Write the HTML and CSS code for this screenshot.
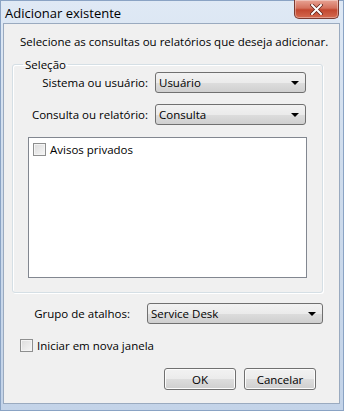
FILE: index.html
```html
<!DOCTYPE html>
<html lang="pt-BR">
<head>
  <meta charset="UTF-8">
  <title>Adicionar existente</title>
  <link rel="stylesheet" href="styles.css">
</head>
<body>
  <div class="window">
    <div class="titlebar">
      <span class="title">Adicionar existente</span>
      <button class="close" type="button">
        <svg width="13" height="11" viewBox="0 0 13 11">
          <path d="M2 1 L11 10 M11 1 L2 10" stroke="#5a1f16" stroke-width="3.4" stroke-linecap="square"/>
          <path d="M2 1 L11 10 M11 1 L2 10" stroke="#ffffff" stroke-width="2" stroke-linecap="square"/>
        </svg>
      </button>
    </div>

    <div class="client">
      <p class="intro">Selecione as consultas ou relatórios que deseja adicionar.</p>

      <!-- Grupo de seleção -->
      <fieldset class="group">
        <legend>Seleção</legend>
        <div class="row first">
          <label class="lbl">Sistema ou usuário:</label>
          <div class="combo">Usuário<span class="arrow"></span></div>
        </div>
        <div class="row">
          <label class="lbl">Consulta ou relatório:</label>
          <div class="combo">Consulta<span class="arrow"></span></div>
        </div>
        <div class="listbox">
          <div class="check"><span class="box"></span>Avisos privados</div>
        </div>
      </fieldset>

      <div class="row shortcut">
        <label class="lbl">Grupo de atalhos:</label>
        <div class="combo wide">Service Desk<span class="arrow"></span></div>
      </div>

      <div class="check newwin"><span class="box"></span>Iniciar em nova janela</div>

      <div class="actions">
        <button class="btn" type="button">OK</button>
        <button class="btn" type="button">Cancelar</button>
      </div>
    </div>
  </div>
</body>
</html>
```

FILE: styles.css
```css
/* Janela estilo Windows 7 */
body {
  margin: 0;
  padding: 0;
  font-family: "Open Sans", "Noto Sans", sans-serif;
  font-size: 11.5px;
  color: #000;
}

.window {
  width: 344px;
  height: 411px;
  box-sizing: border-box;
  background: linear-gradient(#dfe9f5, #cfdcec 40%, #c3d3e8);
  border: 1px solid #8aa3c4;
  padding: 0 3px 6px 2px;
  display: flex;
  flex-direction: column;
}

.titlebar {
  height: 22px;
  display: flex;
  align-items: flex-start;
  justify-content: space-between;
}

.title {
  font-size: 13px;
  line-height: 22px;
  padding-left: 2px;
  margin-top: 1px;
}

.close {
  width: 45px;
  height: 19px;
  margin-top: -1px;
  margin-right: 1px;
  border: 1px solid #7a3a30;
  border-top: none;
  border-radius: 0 0 5px 5px;
  background: linear-gradient(#e8a394, #d4715d 45%, #c2472f 55%, #d46a4f);
  box-shadow: inset 0 0 0 1px rgba(255, 255, 255, 0.35);
  display: flex;
  align-items: center;
  justify-content: center;
  padding: 0;
}

.client {
  flex: 1;
  background: #f0f0f0;
  border: 1px solid #9aaabf;
  padding: 0 16px 0 8px;
}

.intro {
  margin: 10px 0 0 8px;
  white-space: nowrap;
}

.group {
  margin: 8px 0 0 0;
  padding: 0 15px 14px 15px;
  min-inline-size: 0;
  border: 1px solid #d5dfe5;
  border-radius: 3px;
  box-shadow: inset 1px 1px 0 #fff, 1px 1px 0 #fff;
}

.group legend {
  padding: 0 2px;
  margin-left: -5px;
}

.row {
  display: flex;
  align-items: center;
  justify-content: flex-end;
  height: 21px;
  margin-right: 1px;
}

.row + .row {
  margin-top: 11px;
}

.lbl {
  margin-right: 7px;
  white-space: nowrap;
}

.combo {
  position: relative;
  width: 151px;
  height: 21px;
  box-sizing: border-box;
  border: 1px solid #707070;
  border-radius: 3px;
  background: linear-gradient(#f2f2f2, #ebebeb 50%, #dddddd 51%, #cfcfcf);
  padding-left: 3px;
  line-height: 19px;
}

.combo.wide {
  width: 176px;
}

.arrow {
  position: absolute;
  right: 6px;
  top: 8px;
  border-left: 4px solid transparent;
  border-right: 4px solid transparent;
  border-top: 4px solid #000;
}

.listbox {
  margin-top: 12px;
  height: 141px;
  box-sizing: border-box;
  border: 1px solid #828790;
  background: #fff;
  padding: 3px 4px;
}

.check {
  display: flex;
  align-items: center;
  height: 16px;
  white-space: nowrap;
}

.box {
  width: 11px;
  height: 11px;
  border: 1px solid #8e8f8f;
  background: linear-gradient(135deg, #dcdcdc, #f6f6f6);
  box-shadow: inset 0 0 0 1px #f4f4f4;
  margin-right: 4px;
}

.shortcut {
  margin-top: 10px;
  margin-right: 0;
}

.shortcut .lbl {
  margin-right: 17px;
}

.newwin {
  margin-top: 13px;
  margin-left: 8px;
}

.actions {
  display: flex;
  justify-content: flex-end;
  gap: 8px;
  margin-top: 15px;
  padding-right: 7px;
}

.btn {
  width: 72px;
  height: 22px;
  border: 1px solid #707070;
  border-radius: 3px;
  background: linear-gradient(#f2f2f2, #ebebeb 50%, #dddddd 51%, #cfcfcf);
  box-shadow: inset 0 0 0 1px #fcfcfc;
  font-family: inherit;
  font-size: 11.5px;
  padding: 0;
}
```
